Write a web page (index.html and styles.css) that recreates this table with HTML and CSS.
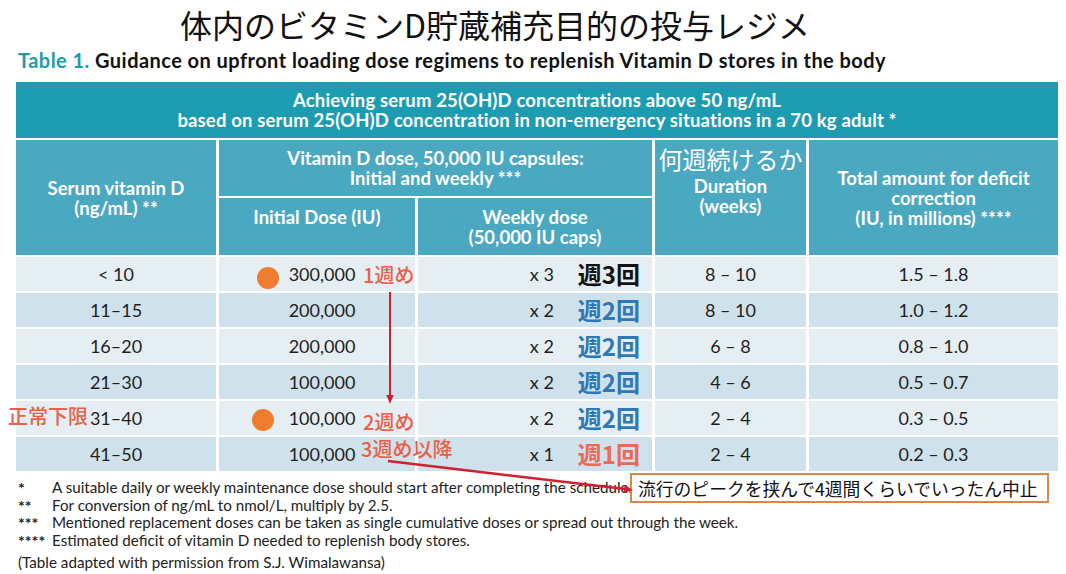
FILE: index.html
```html
<!DOCTYPE html>
<html lang="ja">
<head>
<meta charset="utf-8">
<title>Vitamin D loading dose</title>
<link rel="stylesheet" href="styles.css">
</head>
<body>
<div class="page">
  <h1 class="title">体内のビタミンD貯蔵補充目的の投与レジメ</h1>
  <p class="subtitle"><span class="tlabel">Table 1.</span> Guidance on upfront loading dose regimens to replenish Vitamin D stores in the body</p>

  <div class="table">
    <div class="band"><span>Achieving serum 25(OH)D concentrations above 50 ng/mL</span><span>based on serum 25(OH)D concentration in non-emergency situations in a 70 kg adult *</span></div>
    <div class="h h-serum">Serum vitamin D<br>(ng/mL) **</div>
    <div class="h h-dose">Vitamin D dose, 50,000 IU capsules:<br>Initial and weekly ***</div>
    <div class="h h-dur"><span class="jp-h">何週続けるか</span>Duration<br>(weeks)</div>
    <div class="h h-total">Total amount for deficit<br>correction<br>(IU, in millions) ****</div>
    <div class="h h-sub h-init">Initial Dose (IU)</div>
    <div class="h h-sub h-week">Weekly dose<br>(50,000 IU caps)</div>

    <div class="d a">&lt; 10</div>
    <div class="d a init">300,000</div>
    <div class="d a wk"><span>x 3</span><span class="k k-black">週3回</span></div>
    <div class="d a">8 – 10</div>
    <div class="d a">1.5 – 1.8</div>

    <div class="d b">11–15</div>
    <div class="d b init">200,000</div>
    <div class="d b wk"><span>x 2</span><span class="k k-blue">週2回</span></div>
    <div class="d b">8 – 10</div>
    <div class="d b">1.0 – 1.2</div>

    <div class="d a">16–20</div>
    <div class="d a init">200,000</div>
    <div class="d a wk"><span>x 2</span><span class="k k-blue">週2回</span></div>
    <div class="d a">6 – 8</div>
    <div class="d a">0.8 – 1.0</div>

    <div class="d b">21–30</div>
    <div class="d b init">100,000</div>
    <div class="d b wk"><span>x 2</span><span class="k k-blue">週2回</span></div>
    <div class="d b">4 – 6</div>
    <div class="d b">0.5 – 0.7</div>

    <div class="d a">31–40</div>
    <div class="d a init">100,000</div>
    <div class="d a wk"><span>x 2</span><span class="k k-blue">週2回</span></div>
    <div class="d a">2 – 4</div>
    <div class="d a">0.3 – 0.5</div>

    <div class="d b">41–50</div>
    <div class="d b init">100,000</div>
    <div class="d b wk"><span>x 1</span><span class="k k-red">週1回</span></div>
    <div class="d b">2 – 4</div>
    <div class="d b">0.2 – 0.3</div>
  </div>

  <div class="notes">
    <div class="note"><span class="star">*</span><span>A suitable daily or weekly maintenance dose should start after completing the schedule.</span></div>
    <div class="note"><span class="star">**</span><span>For conversion of ng/mL to nmol/L, multiply by 2.5.</span></div>
    <div class="note"><span class="star">***</span><span>Mentioned replacement doses can be taken as single cumulative doses or spread out through the week.</span></div>
    <div class="note"><span class="star">****</span><span>Estimated deficit of vitamin D needed to replenish body stores.</span></div>
    <div class="source">(Table adapted with permission from S.J. Wimalawansa)</div>
  </div>

  <span class="dot dot-1"></span>
  <span class="dot dot-2"></span>
  <span class="anno anno-w1">1週め</span>
  <span class="anno anno-w2">2週め</span>
  <span class="anno anno-w3">3週め以降</span>
  <span class="anno anno-low">正常下限</span>
  <div class="callout">流行のピークを挟んで4週間くらいでいったん中止</div>

  <svg class="arrows" width="1066" height="574" viewBox="0 0 1066 574" aria-hidden="true">
    <line x1="390" y1="292" x2="390" y2="397" stroke="#d0202d" stroke-width="2"/>
    <polygon points="390,404 386.3,395 393.7,395" fill="#d0202d"/>
    <line x1="388" y1="461" x2="625" y2="489" stroke="#d0202d" stroke-width="2.5"/>
    <polygon points="633,490 624.6,484.9 623.6,492.9" fill="#d0202d"/>
  </svg>
</div>
</body>
</html>
```

FILE: styles.css
```css
body {
  margin: 0;
  background: #ffffff;
}

.page {
  position: relative;
  width: 1066px;
  height: 574px;
  overflow: hidden;
  background: #ffffff;
  color: #1f1f1f;
  font-family: Lato, "Noto Sans CJK JP", sans-serif;
}

.title {
  margin: 0;
  padding: 5px 0 0 180px;
  font: 400 32px/38px "Noto Sans CJK JP", sans-serif;
  color: #111111;
}

.subtitle {
  margin: 6px 0 0 18px;
  font: 700 20px/22px Lato, "Noto Sans CJK JP", sans-serif;
  letter-spacing: 0.45px;
  color: #111111;
  white-space: nowrap;
}

.tlabel {
  color: #1d9bb2;
}

.table {
  display: grid;
  width: 1042px;
  margin: 11px 0 0 16px;
  grid-template-columns: 200px 196px 234px 151px 249px;
  grid-template-rows: 56px 56px 57px repeat(6, 34px);
  gap: 2px 3px;
}

.band {
  grid-column: 1 / -1;
  display: flex;
  flex-direction: column;
  align-items: center;
  justify-content: center;
  gap: 1px;
  text-align: center;
  background: #1d9cb1;
  color: #ffffff;
  font-weight: 700;
  font-size: 18.5px;
  line-height: 19px;
  letter-spacing: 0.15px;
  white-space: nowrap;
}

.h {
  display: flex;
  flex-direction: column;
  align-items: center;
  justify-content: center;
  text-align: center;
  background: #4aa8c1;
  color: #ffffff;
  font-weight: 700;
  font-size: 18.5px;
  line-height: 20px;
  white-space: nowrap;
}

.h-serum { grid-column: 1; grid-row: 2 / 4; }
.h-dose { grid-column: 2 / 4; grid-row: 2; }
.h-dur { grid-column: 4; grid-row: 2 / 4; justify-content: flex-start; padding-top: 2px; }
.h-total { grid-column: 5; grid-row: 2 / 4; }
.h-sub { grid-row: 3; justify-content: flex-start; padding-top: 9px; }
.h-init { grid-column: 2; }
.h-week { grid-column: 3; }

.jp-h {
  font: 400 24px/34px "Noto Sans CJK JP", sans-serif;
}

.d {
  display: flex;
  align-items: center;
  justify-content: center;
  font-size: 18px;
  color: #1f1f1f;
}

.a { background: #e5eef2; }
.b { background: #cfe1ea; }

.init { padding-left: 10px; }

.wk {
  justify-content: flex-end;
  gap: 24px;
  padding-right: 12px;
}

.k {
  font: 700 24px/28px "Noto Sans CJK JP", sans-serif;
}
.k-black { color: #111111; }
.k-blue { color: #2f78b8; }
.k-red { color: #ec6a55; }

.notes {
  margin: 8px 0 0 18px;
  font-size: 15.2px;
  line-height: 17.5px;
  color: #222222;
}

.note {
  display: grid;
  grid-template-columns: 34px auto;
  white-space: nowrap;
}

.star {
  font-size: 16px;
  font-weight: 700;
}

.source {
  margin-top: 5px;
}

.dot {
  position: absolute;
  width: 22px;
  height: 22px;
  border-radius: 50%;
  background: #ee7d31;
}
.dot-1 { left: 257px; top: 267px; }
.dot-2 { left: 252px; top: 409px; }

.anno {
  position: absolute;
  font: 500 20px/24px "Noto Sans CJK JP", sans-serif;
  color: #e9604a;
  white-space: nowrap;
}
.anno-w1 { left: 363px; top: 263px; }
.anno-w2 { left: 363px; top: 410px; }
.anno-w3 { left: 361px; top: 437px; }
.anno-low { left: 8px; top: 404px; }

.callout {
  position: absolute;
  left: 630px;
  top: 473px;
  width: 419px;
  height: 30px;
  box-sizing: border-box;
  border: 2px solid #d9864a;
  background: #ffffff;
  padding-left: 6px;
  font: 400 17.8px/26px "Noto Sans CJK JP", sans-serif;
  color: #111111;
  white-space: nowrap;
}

.arrows {
  position: absolute;
  left: 0;
  top: 0;
  pointer-events: none;
}
```
